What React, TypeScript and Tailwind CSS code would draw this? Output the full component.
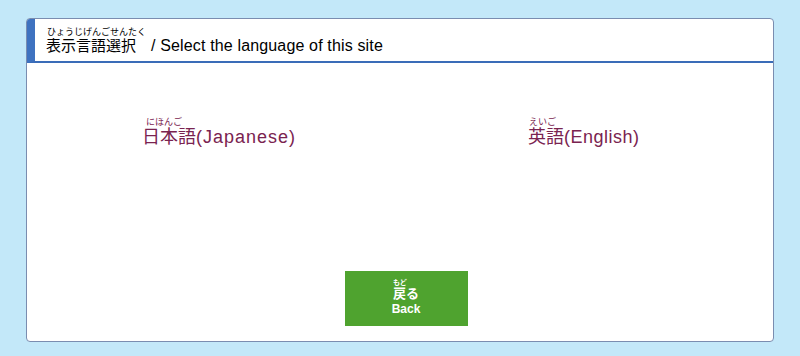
const jp = '"Liberation Sans", "Noto Sans CJK JP", sans-serif';

function Ruby({
  base,
  reading,
  rtClass,
}: {
  base: string;
  reading: string;
  rtClass: string;
}) {
  return (
    <span className="inline-flex flex-col">
      <span className={`w-0 overflow-visible whitespace-nowrap ${rtClass}`}>{reading}</span>
      <span>{base}</span>
    </span>
  );
}

export default function App() {
  return (
    <div className="min-h-[356px] w-[800px] bg-[#c3e8f9] px-[26px] pt-[18px]" style={{ fontFamily: jp }}>
      <div className="flex h-[324px] flex-col overflow-hidden rounded-[4px] border border-[#7a8db0] bg-white">
        <header className="flex h-[44px] items-end border-b-2 border-[#3a6cb8] border-l-[8px] border-l-[#3e72c0] pb-[6px] pl-[11px]">
          <h1 className="flex items-end text-[15px] leading-[18px] text-black">
            <Ruby base="表示言語選択" reading="ひょうじげんごせんたく" rtClass="pl-[1px] text-[9px] leading-[10px]" />
            <span className="pl-[15px] text-[16px] tracking-[0.15px]">/&nbsp;Select the language of this site</span>
          </h1>
        </header>

        <div className="flex flex-1 flex-col">
          <div className="mt-[54px] grid grid-cols-2">
            <a href="#" className="flex items-end pl-[115px] text-[18px] leading-[21px] text-[#7a2350]">
              <Ruby base="日本語" reading="にほんご" rtClass="pl-[4px] text-[9px] leading-[10px]" />
              <span className="tracking-[1px]">(Japanese)</span>
            </a>
            <a href="#" className="flex items-end pl-[128px] text-[18px] leading-[21px] text-[#7a2350]">
              <Ruby base="英語" reading="えいご" rtClass="pl-[1px] text-[9px] leading-[10px]" />
              <span className="tracking-[0.5px]">(English)</span>
            </a>
          </div>

          <div className="mt-auto mb-[15px] flex justify-center pl-[12px]">
            <button className="flex h-[55px] w-[123px] flex-col items-center bg-[#4fa32f] pt-[8px] font-bold text-white">
              <span className="flex flex-col items-start">
                <span className="text-[7px] leading-[7px]">もど</span>
                <span className="text-[13px] leading-[15px]">戻る</span>
              </span>
              <span className="mt-[2px] text-[12px] leading-[13px]">Back</span>
            </button>
          </div>
        </div>
      </div>
    </div>
  );
}
